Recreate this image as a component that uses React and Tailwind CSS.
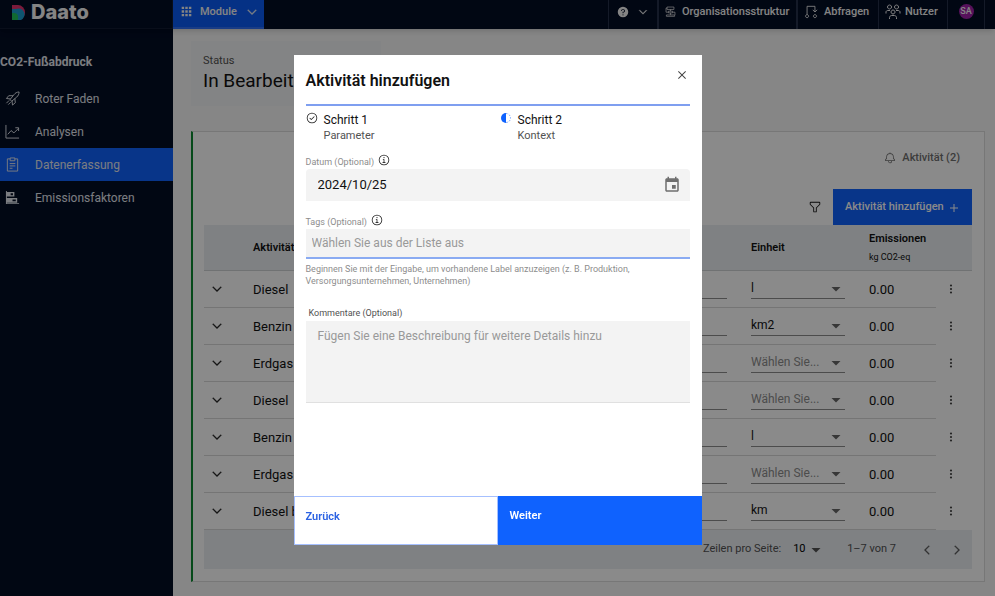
import { useState } from 'react';

const PATHS = {
  chevronDown: 'M16 22L6 12 7.4 10.6 16 19.2 24.6 10.6 26 12z',
  chevronLeft: 'M10 16L20 6 21.4 7.4 12.8 16 21.4 24.6 20 26z',
  chevronRight: 'M22 16L12 26 10.6 24.6 19.2 16 10.6 7.4 12 6z',
  close: 'M17.414 16L24 9.414 22.586 8 16 14.586 9.414 8 8 9.414 14.586 16 8 22.586 9.414 24 16 17.414 22.586 24 24 22.586z',
  add: 'M17 15V8h-2v7H8v2h7v7h2v-7h7v-2z',
  check: 'M14 21.414L9 16.413 10.413 15 14 18.586 21.585 11 23 12.415zM16 2a14 14 0 1 0 14 14A14 14 0 0 0 16 2Zm0 26a12 12 0 1 1 12-12 12 12 0 0 1-12 12Z',
  info: 'M17 22V14H13v2h2v6H12v2h8V22zM16 8a1.5 1.5 0 1 0 1.5 1.5A1.5 1.5 0 0 0 16 8ZM16 2a14 14 0 1 0 14 14A14 14 0 0 0 16 2Zm0 26a12 12 0 1 1 12-12 12 12 0 0 1-12 12Z',
  help: 'M16 2a14 14 0 1 0 14 14A14 14 0 0 0 16 2Zm0 23a1.5 1.5 0 1 1 1.5-1.5A1.5 1.5 0 0 1 16 25Zm1.1-7.5v2.1h-2.2v-4.4H17a2.2 2.2 0 0 0 0-4.5h-2a2.3 2.3 0 0 0-2.3 2.3v.5h-2.2V13A4.5 4.5 0 0 1 15 8.5h2a4.5 4.5 0 0 1 .1 9Z',
  bell: 'M28.707 19.293 26 16.586V13a10.014 10.014 0 0 0-9-9.95V1h-2v2.05A10.014 10.014 0 0 0 6 13v3.586l-2.707 2.707A1 1 0 0 0 3 20v3a1 1 0 0 0 1 1h7v.777a5.152 5.152 0 0 0 4.5 5.199A5.006 5.006 0 0 0 21 25v-1h7a1 1 0 0 0 1-1v-3a1 1 0 0 0-.293-.707ZM19 25a3 3 0 0 1-6 0v-1h6Zm8-3H5v-1.586l2.707-2.707A1 1 0 0 0 8 17v-4a8 8 0 0 1 16 0v4a1 1 0 0 0 .293.707L27 20.414Z',
  filter: 'M18 28h-4a2 2 0 0 1-2-2v-7.59L4.59 11A2 2 0 0 1 4 9.59V6a2 2 0 0 1 2-2h20a2 2 0 0 1 2 2v3.59A2 2 0 0 1 27.41 11L20 18.41V26a2 2 0 0 1-2 2ZM6 6v3.59l8 8V26h4v-8.41l8-8V6Z',
  menu: 'M16 5.500a2.500 2.500 0 1 0 0 5 2.500 2.500 0 0 0 0-5zM16 13.500a2.500 2.500 0 1 0 0 5 2.500 2.500 0 0 0 0-5zM16 21.500a2.500 2.500 0 1 0 0 5 2.500 2.500 0 0 0 0-5z',
  apps: 'M2 2h7v7H2zM12.500 2h7v7h-7zM23 2h7v7h-7zM2 12.500h7v7H2zM12.500 12.500h7v7h-7zM23 12.500h7v7h-7zM2 23h7v7H2zM12.500 23h7v7h-7zM23 23h7v7h-7z',
  caret: 'M8 12.500l8 8 8-8z',
  bars: 'M2 2h2v2h16v10H4v3h22v10H4v1h26v2H2zM12 7v4h5V7zM16 20v4h7v-4z',
};

// outlined icons, drawn as strokes on the same 32px grid
const STROKES = {
  rocket: 'M11 18L19 8c3-4 6-5.500 11-6 0 5-2 8-5 11L14 22zM12 17l-9-1 5-6 9 0M15 21l1 9 6-5-1-9M9 20l-6 6M12 24l-5 5',
  growth: 'M2 2v28h28M6 22l7-8 6 5 10-10M22 8h7v7',
  clipboard: 'M11 4H5v26h22V4h-6M11 2h10v6H11zM10 14h12M10 19h12M10 24h6',
  org: 'M6 3h20v7H6zM10 15h12v5H10zM4 26h24v4H4zM6 6H3v12h7M22 18h7v8M16 10v5M16 20v6',
  request: 'M7 22V3h18v13M20 11l5 5 5-5M7 22a3.500 3.500 0 1 0 .1 0M25 22a3.500 3.500 0 1 0 .1 0',
  users: 'M9 2a4 4 0 1 0 .1 0M23 2a4 4 0 1 0 .1 0M16 12a4 4 0 1 0 .1 0M2 19v-3c0-2 2-3 4-3h4M30 19v-3c0-2-2-3-4-3h-4M9 30v-3c0-2 2-4 4-4h6c2 0 4 2 4 4v3',
};

function Icon({ name, className }) {
  return STROKES[name] ? (
    <svg viewBox="0 0 32 32" fill="none" stroke="currentColor" strokeWidth="2" className={`shrink-0 ${className}`} aria-hidden="true">
      <path d={STROKES[name]} />
    </svg>
  ) : (
    <svg viewBox="0 0 32 32" fill="currentColor" fillRule="evenodd" className={`shrink-0 ${className}`} aria-hidden="true">
      <path d={PATHS[name]} />
    </svg>
  );
}

const navItems = [
  { label: 'Roter Faden', icon: 'rocket' },
  { label: 'Analysen', icon: 'growth' },
  { label: 'Datenerfassung', icon: 'clipboard', active: true },
  { label: 'Emissionsfaktoren', icon: 'bars' },
];

const rows = [
  { name: 'Diesel', unit: 'l' },
  { name: 'Benzin', unit: 'km2' },
  { name: 'Erdgas', unit: '' },
  { name: 'Diesel', unit: '' },
  { name: 'Benzin', unit: 'l' },
  { name: 'Erdgas', unit: '' },
  { name: 'Diesel b', unit: 'km' },
];

function Header() {
  return (
    <header className="relative z-10 flex h-[29px] bg-[#030d24] text-[11px] font-medium text-[#f4f4f4] shadow-md">
      <a href="#home" className="flex w-[173px] shrink-0 items-center gap-1.5 border-b border-r border-[#111b30] pb-1 pl-3">
        <svg viewBox="0 0 13 15" className="h-[15px] w-[13px]" aria-hidden="true">
          <path d="M0 0h6a7 7.500 0 0 1 0 15H0z" fill="#e5326e" />
          <path d="M0 4h4a5.500 5.500 0 0 1 5 11H0z" fill="#1b9dd0" />
          <path d="M0 8h2a4 4 0 0 1 4 4v3H0z" fill="#21c45d" />
        </svg>
        <span className="font-['Inter',sans-serif] text-[20px] font-extrabold leading-6">Daato</span>
      </a>
      <button className="flex w-[91px] items-center gap-2 border-b-2 border-[#2f6ff5] bg-[#0b5cf5] pb-1 pl-2">
        <Icon name="apps" className="size-[11px]" />
        <span className="pt-0.5">Module</span>
        <Icon name="chevronDown" className="ml-auto mr-2 size-3.5 stroke-current" />
      </button>
      <nav className="ml-auto mr-[10px] flex border-r border-[#26304a]">
        <button aria-label="Hilfe" className="flex w-[49px] items-center gap-2 border-l border-[#26304a] pb-1.5 pl-2">
          <Icon name="help" className="size-3" />
          <Icon name="chevronDown" className="size-3 stroke-current" />
        </button>
        <a href="#org" className="flex w-[139px] items-center gap-1.5 border-l-2 border-[#26304a] pb-1.5 pl-1.5">
          <Icon name="org" className="size-[11px]" />
          <span className="pt-0.5">Organisationsstruktur</span>
        </a>
        <a href="#requests" className="flex w-[82px] items-center gap-1.5 border-l-2 border-[#26304a] pb-1.5 pl-1.5">
          <Icon name="request" className="size-3.5" />
          <span className="pt-0.5">Abfragen</span>
        </a>
        <a href="#users" className="flex w-[69px] items-center gap-1 border-l border-[#26304a] pb-1.5 pl-1.5">
          <Icon name="users" className="size-4" />
          <span className="pt-0.5">Nutzer</span>
        </a>
        <button className="flex w-[37px] items-center justify-center border-l border-[#26304a] pb-1.5">
          <span className="flex size-[15px] items-center justify-center rounded-full bg-[#a020a8] text-[9px]">SA</span>
        </button>
      </nav>
    </header>
  );
}

function Sidebar() {
  return (
    <aside className="w-[173px] shrink-0 bg-[#030d24] text-[#e4e7ee]">
      <h2 className="pb-[11px] pt-6 text-[12px] font-bold leading-[18px]">CO2-Fußabdruck</h2>
      <nav>
        {navItems.map(item => (
          <a key={item.label} href={`#${item.label}`}
             className={`flex h-[33px] items-center gap-[15px] pl-[5px] text-[12px] ${item.active ? 'bg-[#0f62fe]' : ''}`}>
            <Icon name={item.icon} className="size-[15px]" />
            {item.label}
          </a>
        ))}
      </nav>
    </aside>
  );
}

function ActivityTable() {
  return (
    <table className="w-full table-fixed border-collapse text-left text-[13px]">
      <colgroup>
        <col className="w-[49px]" />
        <col />
        <col className="w-[118px]" />
        <col className="w-[118px]" />
        <col className="w-[67px]" />
        <col className="w-[36px]" />
      </colgroup>
      <thead className="h-[46px] bg-[#eaeef2] text-[11px]">
        <tr className="border-b border-[#cfd2d5]">
          <th></th>
          <th className="pt-0.5 font-semibold">Aktivität</th>
          <th></th>
          <th className="pt-0.5 font-semibold">Einheit</th>
          <th colSpan={2} className="pt-0.5 font-semibold leading-4">
            Emissionen
            <span className="block pt-0.5 text-[9px] font-normal leading-4">kg CO2-eq</span>
          </th>
        </tr>
      </thead>
      <tbody>
        {rows.map((row, i) => (
          <tr key={i} className="h-[37px]">
            <td className="border-b border-[#d8d8d8] pl-1.5">
              <button aria-label="Zeile aufklappen" className="block"><Icon name="chevronDown" className="size-3.5 stroke-current" /></button>
            </td>
            <td className="border-b border-[#d8d8d8] pt-0.5">{row.name}</td>
            <td className="border-b border-[#d8d8d8]">
              <input aria-label="Menge" className="block h-5 w-[94px] border-b border-[#8d8d8d]" />
            </td>
            <td className="border-b border-[#d8d8d8]">
              <span className="flex h-5 w-[94px] items-center border-b border-[#8d8d8d]">
                <select aria-label="Einheit" defaultValue={row.unit}
                        className={`min-w-0 flex-1 appearance-none pb-0.5 text-[12px] ${row.unit ? '' : 'text-[#8d8d8d]'}`}>
                  <option value={row.unit}>{row.unit || 'Wählen Sie...'}</option>
                </select>
                <Icon name="caret" className="size-[18px] text-[#666]" />
              </span>
            </td>
            <td className="border-b border-[#d8d8d8] pt-0.5">0.00</td>
            <td className="pl-2">
              <button aria-label="Aktionen" className="block text-[#444]"><Icon name="menu" className="size-3.5" /></button>
            </td>
          </tr>
        ))}
      </tbody>
    </table>
  );
}

function Main() {
  return (
    <main className="min-w-0 flex-1 bg-[#f8f8f8] pb-3 pl-[18px] pr-[10px] pt-3">
      <section className="h-[65px] w-[190px] bg-[#f2f4f5] px-3 pt-3">
        <p className="text-[11px] leading-4 text-[#525252]">Status</p>
        <p className="whitespace-nowrap text-[19px] leading-6">In Bearbeit</p>
      </section>
      <section className="mt-[25px] border border-l-2 border-[#dcdcdc] border-l-[#0c8a30] bg-white pb-3 pl-[11px] pr-3">
        <div className="flex justify-end pr-3 pt-[18px] text-[11px] font-medium text-[#6f6f6f]">
          <button className="flex items-center gap-1.5"><Icon name="bell" className="size-3" />Aktivität (2)</button>
        </div>
        <div className="mt-[22px] flex items-center justify-end gap-[11px]">
          <button aria-label="Filter"><Icon name="filter" className="size-3.5" /></button>
          <button className="flex h-9 w-[139px] items-center justify-between bg-[#0f62fe] pl-3 pr-2.5 pt-0.5 text-[11px] font-medium text-white">
            Aktivität hinzufügen
            <Icon name="add" className="size-4" />
          </button>
        </div>
        <ActivityTable />
        <footer className="flex h-[39px] items-center justify-end bg-[#eaeef2] pr-2 text-[11px] text-[#525252]">
          <label htmlFor="page-size">Zeilen pro Seite:</label>
          <select id="page-size" className="ml-3 w-3.5 appearance-none text-black"><option>10</option></select>
          <Icon name="caret" className="size-[18px]" />
          <span className="ml-[22px]">1–7 von 7</span>
          <button aria-label="Vorherige Seite" className="ml-6"><Icon name="chevronLeft" className="size-3.5 stroke-current" /></button>
          <button aria-label="Nächste Seite" className="ml-4"><Icon name="chevronRight" className="size-3.5 stroke-current" /></button>
        </footer>
      </section>
    </main>
  );
}

function ActivityDialog() {
  const [date, setDate] = useState('2024/10/25');

  return (
    <div className="fixed inset-0 z-20 flex items-center justify-center bg-black/46 pt-1">
      <form role="dialog" aria-labelledby="dialog-title" className="w-[408px] bg-white">
        <div className="px-3">
          <div className="flex h-[49px] items-start justify-between">
            <h1 id="dialog-title" className="pt-4 text-[16px] font-semibold leading-5">Aktivität hinzufügen</h1>
            <button type="button" aria-label="Schließen" className="pt-3 text-[#444]"><Icon name="close" className="size-4" /></button>
          </div>
          <ol className="flex border-t-2 border-[#7f9ff0] pt-1.5">
            <li className="flex w-[194px] gap-1.5">
              <Icon name="check" className="size-3" />
              <div>
                <p className="text-[12px] leading-4">Schritt 1</p>
                <p className="text-[11px] leading-4 text-[#525252]">Parameter</p>
              </div>
            </li>
            <li className="flex gap-1.5">
              <svg viewBox="0 0 12 12" className="size-3 shrink-0" aria-hidden="true">
                <path d="M6 1a5 5 0 0 0 0 10z" fill="#0f62fe" />
                <path d="M6 1.500a4.500 4.500 0 0 1 0 9" fill="none" stroke="#6f9ffe" strokeDasharray="1.500 1.500" />
              </svg>
              <div>
                <p className="text-[12px] leading-4">Schritt 2</p>
                <p className="text-[11px] leading-4 text-[#525252]">Kontext</p>
              </div>
            </li>
          </ol>

          <div className="mt-2.5 flex h-[15px] items-end gap-1">
            <label htmlFor="date" className="text-[9px] leading-[14px] text-[#8d8d8d]">Datum (Optional)</label>
            <Icon name="info" className="mb-[3px] size-3" />
          </div>
          <div className="flex h-8 items-center rounded-t-sm bg-[#f3f3f3] pl-3 pr-[9px]">
            <input id="date" value={date} onChange={e => setDate(e.target.value)} className="min-w-0 flex-1 text-[13px] outline-none" />
            <button type="button" aria-label="Kalender öffnen" className="text-[#6f6f6f]">
              <svg viewBox="0 0 24 24" fill="currentColor" className="size-[18px]" aria-hidden="true">
                <path d="M17 12h-5v5h5v-5zM16 1v2H8V1H6v2H5c-1.110 0-1.990.9-1.990 2L3 19c0 1.100.890 2 2 2h14c1.100 0 2-.9 2-2V5c0-1.100-.9-2-2-2h-1V1h-2zm3 18H5V8h14v11z" />
              </svg>
            </button>
          </div>

          <div className="mt-[13px] flex h-[15px] items-end gap-1">
            <label htmlFor="tags" className="text-[9px] leading-[14px] text-[#8d8d8d]">Tags (Optional)</label>
            <Icon name="info" className="mb-[3px] size-3" />
          </div>
          <input id="tags" placeholder="Wählen Sie aus der Liste aus"
                 className="block h-[30px] w-full border-b-2 border-[#8aabf2] bg-[#f3f3f3] px-1.5 text-[12px] outline-none placeholder:text-[#999]" />
          <p className="pt-1 text-[9px] leading-3 text-[#8d8d8d]">
            Beginnen Sie mit der Eingabe, um vorhandene Label anzuzeigen (z. B. Produktion, Versorgungsunternehmen, Unternehmen)
          </p>

          <label htmlFor="comments" className="mt-[18px] block pl-[3px] text-[9px] leading-4 text-[#525252]">Kommentare (Optional)</label>
          <textarea id="comments" placeholder="Fügen Sie eine Beschreibung für weitere Details hinzu"
                    className="block h-[82px] w-full resize-none border-b border-[#e0e0e0] bg-[#f3f3f3] px-3 py-1.5 text-[12px] outline-none placeholder:text-[#999]" />
        </div>
        <div className="mt-[93px] flex h-[49px] text-left text-[11px] font-semibold leading-4">
          <button type="button" className="flex flex-1 border border-[#a6c0ff] px-[11px] pt-3 text-[#2b62e3]">Zurück</button>
          <button className="flex flex-1 bg-[#0f62fe] px-3 pt-3 text-white">Weiter</button>
        </div>
      </form>
    </div>
  );
}

export default function App() {
  return (
    <div className="flex min-h-screen flex-col font-['Roboto',sans-serif] text-[#111]">
      <Header />
      <div className="flex flex-1">
        <Sidebar />
        <Main />
      </div>
      <ActivityDialog />
    </div>
  );
}
